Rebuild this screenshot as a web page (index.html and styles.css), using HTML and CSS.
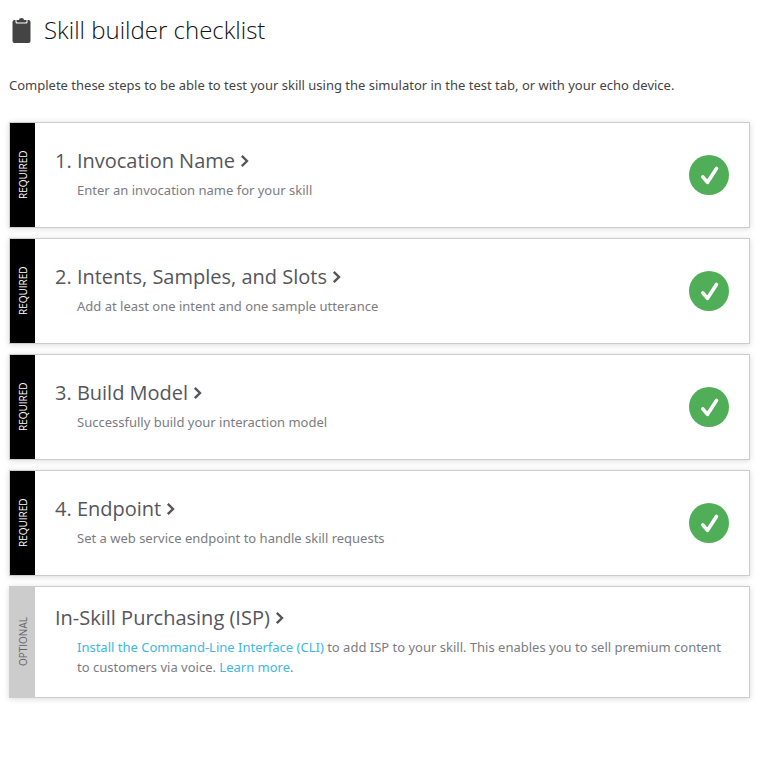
FILE: index.html
```html
<!DOCTYPE html>
<html lang="en">
<head>
<meta charset="utf-8">
<meta name="viewport" content="width=device-width, initial-scale=1">
<title>Skill builder checklist</title>
<link rel="stylesheet" href="styles.css">
</head>
<body>
<svg class="defs" width="0" height="0" aria-hidden="true">
  <symbol id="chevron" viewBox="0 0 10 14"><path d="M1.800 1.800L7 7l-5.200 5.200" fill="none" stroke="currentColor" stroke-width="2.400"/></symbol>
  <symbol id="check" viewBox="0 0 40 40"><circle cx="20" cy="20" r="20" fill="#50ae58"/><path d="M13.800 21.800l4.700 5.500 9-13.800" fill="none" stroke="#fff" stroke-width="3.600" stroke-linecap="round" stroke-linejoin="round"/></symbol>
</svg>
<main class="checklist">
  <header class="heading">
    <svg class="clipboard" viewBox="0 -1 20 26" aria-hidden="true"><path d="M2.500 2H3.500v2A1.500 1.500 0 0 0 5 5.500h9a1.500 1.500 0 0 0 1.500-1.500v-2h1A2 2 0 0 1 18.500 4v19a2 2 0 0 1-2 2h-14a2 2 0 0 1-2-2v-19a2 2 0 0 1 2-2z" fill="#444"/><path d="M4.500 2h2.500Q7 0 9.500 0t2.500 2h2.500V3.500a1 1 0 0 1-1 1h-8a1 1 0 0 1-1-1z" fill="#444"/></svg>
    <h1>Skill builder checklist</h1>
  </header>
  <p class="intro">Complete these steps to be able to test your skill using the simulator in the test tab, or with your echo device.</p>
  <section class="card">
    <div class="tag">REQUIRED</div>
    <div class="body"><h2><a href="#invocation">1. Invocation Name<svg class="chevron"><use href="#chevron"/></svg></a></h2><p>Enter an invocation name for your skill</p></div>
    <svg class="check" role="img" aria-label="Complete"><use href="#check"/></svg>
  </section>
  <section class="card">
    <div class="tag">REQUIRED</div>
    <div class="body"><h2><a href="#intents">2. Intents, Samples, and Slots<svg class="chevron"><use href="#chevron"/></svg></a></h2><p>Add at least one intent and one sample utterance</p></div>
    <svg class="check" role="img" aria-label="Complete"><use href="#check"/></svg>
  </section>
  <section class="card">
    <div class="tag">REQUIRED</div>
    <div class="body"><h2><a href="#build">3. Build Model<svg class="chevron"><use href="#chevron"/></svg></a></h2><p>Successfully build your interaction model</p></div>
    <svg class="check" role="img" aria-label="Complete"><use href="#check"/></svg>
  </section>
  <section class="card">
    <div class="tag">REQUIRED</div>
    <div class="body"><h2><a href="#endpoint">4. Endpoint<svg class="chevron"><use href="#chevron"/></svg></a></h2><p>Set a web service endpoint to handle skill requests</p></div>
    <svg class="check" role="img" aria-label="Complete"><use href="#check"/></svg>
  </section>
  <section class="card optional">
    <div class="tag">OPTIONAL</div>
    <div class="body"><h2><a href="#isp">In-Skill Purchasing (ISP)<svg class="chevron"><use href="#chevron"/></svg></a></h2><p><a href="#cli">Install the Command-Line Interface (CLI)</a> to add ISP to your skill. This enables you to sell premium content to customers via voice. <a href="#more">Learn more</a>.</p></div>
  </section>
</main>
</body>
</html>
```

FILE: styles.css
```css
* { box-sizing: border-box; }
body { margin: 0; background: #fff; color: #444; font-family: "Noto Sans", "Open Sans", sans-serif; font-size: 13px; font-weight: 400; line-height: 20px; }
h1, h2, p { margin: 0; font-weight: 400; }
a { text-decoration: none; color: #3cb8e2; }
.defs { position: absolute; }
.checklist { padding: 14px 18px 14px 9px; }
.heading { display: flex; align-items: center; gap: 12px; padding-left: 3px; height: 32px; }
.clipboard { width: 20px; height: 26px; }
h1 { font-family: "Open Sans", sans-serif; font-size: 24px; line-height: 32px; font-weight: 300; color: #111; }
.intro { margin: 29px 0 27px; }
.card { display: flex; align-items: center; min-height: 106px; margin-bottom: 10px; padding-right: 20px; border: 1px solid #ccc; box-shadow: 0 1px 6px rgba(0, 0, 0, .15); }
.tag { align-self: stretch; width: 25px; flex: none; display: flex; align-items: center; justify-content: center; writing-mode: vertical-rl; transform: rotate(180deg); background: #000; color: #fff; font-family: "Open Sans", sans-serif; font-size: 10px; }
.body { flex: 1; padding: 0 0 3px 20px; }
h2 { font-family: "Open Sans", sans-serif; font-size: 20px; line-height: 28px; }
h2 a { display: inline-flex; align-items: center; gap: 5px; color: #55565c; }
.chevron { width: 10px; height: 14px; }
.body p { margin: 5px 0 0 22px; color: #7b7c82; }
.check { width: 40px; height: 40px; flex: none; }
.optional { min-height: 112px; }
.optional .body { padding-right: 6px; }
.optional .tag { background: #ccc; color: #666; }
```
